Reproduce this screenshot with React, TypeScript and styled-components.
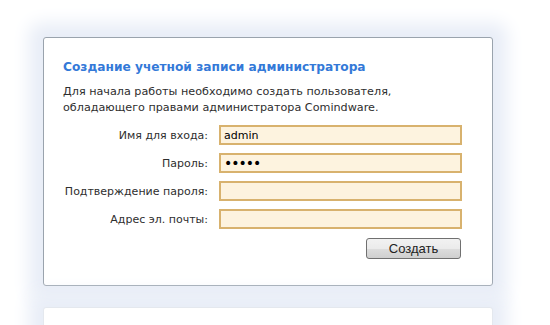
import * as React from 'react';
import styled, { createGlobalStyle } from 'styled-components';

const GlobalStyle = createGlobalStyle`
  html, body {
    margin: 0;
    padding: 0;
    background: #ffffff;
    overflow: hidden;
  }
  body {
    font-family: 'DejaVu Sans', Verdana, sans-serif;
  }
`;

const Page = styled.div`
  width: 550px;
  height: 325px;
  padding: 37px 0 0 43px;
  box-sizing: border-box;
  overflow: hidden;
`;

const Panel = styled.div<{ $tall?: boolean }>`
  width: 450px;
  box-sizing: border-box;
  background: #ffffff;
  border: 1px solid ${p => (p.$tall ? '#9aa3ad' : '#e4e8ee')};
  border-radius: 3px;
  box-shadow: 0 0 18px 14px #e8edf7;
  ${p => (p.$tall ? 'height: 249px; padding: 19px 31px 0 19px;' : 'height: 40px; margin-top: 21px;')}
`;

const Title = styled.h1`
  margin: 0;
  font-size: 12.2px;
  font-weight: bold;
  line-height: 20px;
  color: #3379d8;
`;

const Intro = styled.p`
  margin: 7px 0 0;
  font-size: 11.2px;
  line-height: 16px;
  color: #2e2e2e;
`;

const Form = styled.div`
  margin-top: 9px;
  display: grid;
  grid-template-columns: 145px 243px;
  column-gap: 11px;
  row-gap: 8px;
  align-items: center;
`;

const Label = styled.label`
  text-align: right;
  font-size: 11px;
  color: #2e2e2e;
  white-space: nowrap;
`;

const Field = styled.input`
  width: 243px;
  height: 20px;
  box-sizing: border-box;
  border: 2px solid #d8b26e;
  background: #fdf3df;
  padding: 0 3px;
  font-family: 'DejaVu Sans', Verdana, sans-serif;
  font-size: 11px;
  color: #000;
  outline: none;
  &[type='password'] {
    font-size: 14px;
    letter-spacing: -1px;
  }
`;

const Actions = styled.div`
  display: flex;
  justify-content: flex-end;
  margin-top: 9px;
`;

const Button = styled.button`
  width: 95px;
  height: 21px;
  border: 1px solid #707070;
  border-radius: 3px;
  background: linear-gradient(#f2f2f2 0%, #ebebeb 50%, #dddddd 51%, #cfcfcf 100%);
  font-family: 'Liberation Sans', Arial, sans-serif;
  font-size: 13px;
  color: #222;
  padding: 0;
`;

const fields = [
  { label: 'Имя для входа:', type: 'text', value: 'admin' },
  { label: 'Пароль:', type: 'password', value: '12345' },
  { label: 'Подтверждение пароля:', type: 'password', value: '' },
  { label: 'Адрес эл. почты:', type: 'text', value: '' },
];

export default function App() {
  return (
    <>
      <GlobalStyle />
      <Page>
        <Panel $tall>
          <Title>Создание учетной записи администратора</Title>
          <Intro>
            Для начала работы необходимо создать пользователя,
            <br />
            обладающего правами администратора Comindware.
          </Intro>
          <Form>
            {fields.map(f => (
              <React.Fragment key={f.label}>
                <Label>{f.label}</Label>
                <Field type={f.type} defaultValue={f.value} />
              </React.Fragment>
            ))}
          </Form>
          <Actions>
            <Button>Создать</Button>
          </Actions>
        </Panel>
        <Panel />
      </Page>
    </>
  );
}
